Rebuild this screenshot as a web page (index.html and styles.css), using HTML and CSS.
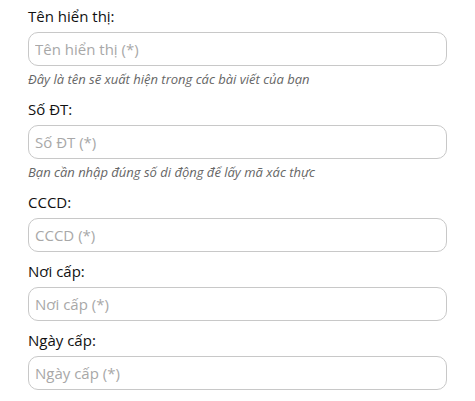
FILE: index.html
```html
<!DOCTYPE html>
<html lang="vi">
<head>
<meta charset="utf-8">
<link rel="stylesheet" href="styles.css">
</head>
<body>
<form class="form">
  <div class="group">
    <label class="label">Tên hiển thị:</label>
    <input class="input" type="text" placeholder="Tên hiển thị (*)">
    <p class="help">Đây là tên sẽ xuất hiện trong các bài viết của bạn</p>
  </div>
  <div class="group">
    <label class="label">Số ĐT:</label>
    <input class="input" type="text" placeholder="Số ĐT (*)">
    <p class="help">Bạn cần nhập đúng số di động để lấy mã xác thực</p>
  </div>
  <div class="group">
    <label class="label">CCCD:</label>
    <input class="input" type="text" placeholder="CCCD (*)">
  </div>
  <div class="group">
    <label class="label">Nơi cấp:</label>
    <input class="input" type="text" placeholder="Nơi cấp (*)">
  </div>
  <div class="group">
    <label class="label">Ngày cấp:</label>
    <input class="input" type="text" placeholder="Ngày cấp (*)">
  </div>
</form>
</body>
</html>
```
FILE: styles.css
```css
* { box-sizing: border-box; }
body {
  margin: 0;
  background: #fff;
  font-family: "Open Sans", sans-serif;
  color: #111;
}
.form {
  padding: 5px 28px 0 28px;
  width: 475px;
}
.group {
  display: flex;
  flex-direction: column;
  margin-bottom: 8px;
}
.label {
  font-size: 15px;
  line-height: 22px;
  margin-bottom: 5px;
}
.input {
  width: 419px;
  height: 34px;
  border: 1px solid #c8c8c8;
  border-radius: 10px;
  padding: 0 6px;
  font-family: "Open Sans", sans-serif;
  font-size: 15px;
  color: #333;
  background: #fff;
  outline: none;
}
.input::placeholder { color: #a8a8a8; }
.help {
  margin: 4px 0 1px 0;
  font-size: 13px;
  line-height: 19px;
  font-style: italic;
  color: #666;
}
```
